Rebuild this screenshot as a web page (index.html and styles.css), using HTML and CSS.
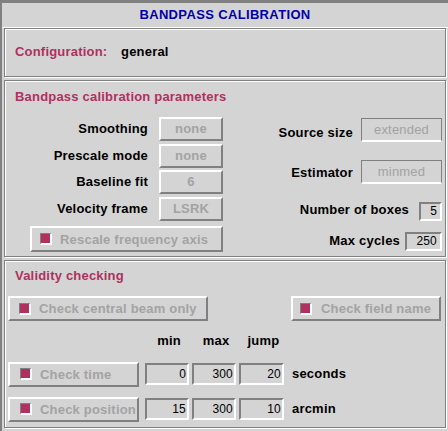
FILE: index.html
```html
<!DOCTYPE html>
<html>
<head>
<meta charset="utf-8">
<title>Bandpass Calibration</title>
<link rel="stylesheet" href="styles.css">
</head>
<body>
<div class="window">
  <div class="title">BANDPASS CALIBRATION</div>
  <div class="frames">
    <section class="frame frame-config">
      <span class="config-label">Configuration:</span>
      <span class="config-value">general</span>
    </section>

    <section class="frame frame-bandpass">
      <h2 class="frame-title">Bandpass calibration parameters</h2>
      <div class="bp-body">
        <div class="bp-left">
          <div class="param-grid">
            <span class="plabel">Smoothing</span><span class="menubox">none</span>
            <span class="plabel">Prescale mode</span><span class="menubox">none</span>
            <span class="plabel">Baseline fit</span><span class="menubox">6</span>
            <span class="plabel">Velocity frame</span><span class="menubox">LSRK</span>
          </div>
          <div class="btn btn-rescale"><span class="indicator"></span><span>Rescale frequency axis</span></div>
        </div>
        <div class="bp-right">
          <div class="rrow row-source"><span class="plabel">Source size</span><span class="optbox">extended</span></div>
          <div class="rrow row-estimator"><span class="plabel">Estimator</span><span class="optbox">minmed</span></div>
          <div class="rrow row-boxes"><span class="plabel">Number of boxes</span><span class="entry entry-boxes">5</span></div>
          <div class="rrow row-cycles"><span class="plabel">Max cycles</span><span class="entry entry-cycles">250</span></div>
        </div>
      </div>
    </section>

    <section class="frame frame-validity">
      <h2 class="frame-title">Validity checking</h2>
      <div class="btn-row">
        <div class="btn btn-central"><span class="indicator"></span><span>Check central beam only</span></div>
        <div class="btn btn-field"><span class="indicator"></span><span>Check field name</span></div>
      </div>
      <div class="vgrid vhead">
        <span></span>
        <span class="colhead">min</span>
        <span class="colhead">max</span>
        <span class="colhead">jump</span>
        <span></span>
      </div>
      <div class="vgrid vrow vrow-time">
        <div class="btn btn-wide"><span class="indicator"></span><span>Check time</span></div>
        <span class="ventry">0</span>
        <span class="ventry">300</span>
        <span class="ventry">20</span>
        <span class="unit">seconds</span>
      </div>
      <div class="vgrid vrow vrow-pos">
        <div class="btn btn-wide"><span class="indicator"></span><span>Check position</span></div>
        <span class="ventry">15</span>
        <span class="ventry">300</span>
        <span class="ventry">10</span>
        <span class="unit">arcmin</span>
      </div>
    </section>
  </div>
</div>
</body>
</html>
```

FILE: styles.css
```css
* { box-sizing: border-box; }
html, body { margin: 0; padding: 0; }
body {
  width: 448px;
  height: 431px;
  overflow: hidden;
  background: #d4d4d4;
  font-family: "Liberation Sans", Arial, sans-serif;
  font-size: 13px;
  font-weight: bold;
  letter-spacing: 0.2px;
  color: #000;
}
.window {
  height: 431px;
  border-top: 3px solid #808080;
  border-left: 2px solid #808080;
}
.title {
  height: 25px;
  line-height: 24px;
  border-bottom: 1px solid #fff;
  text-align: center;
  color: #0000a8;
  letter-spacing: 0.35px;
}
.frames { padding-left: 2px; }
.frame {
  width: 442px;
  border: 1px solid #808080;
  box-shadow: inset 1px 1px 0 #fff, 1px 1px 0 #fff;
  margin-bottom: 3px;
}
.frame-title {
  margin: 0;
  font-size: 13px;
  font-weight: bold;
  line-height: 16px;
  color: #b03060;
  padding-left: 10px;
}

/* configuration */
.frame-config {
  height: 49px;
  display: flex;
  padding: 14.5px 0 0 10px;
  line-height: 16px;
}
.config-label { width: 106px; color: #b03060; }

/* bandpass */
.frame-bandpass { height: 177px; padding-top: 8px; }
.bp-body { display: flex; margin-top: 12px; }
.bp-left { width: 218px; }
.param-grid {
  display: grid;
  grid-template-columns: 143px 64px;
  column-gap: 11px;
  row-gap: 2.5px;
  grid-auto-rows: 24px;
}
.plabel { text-align: right; align-self: center; line-height: 16px; }
.menubox {
  border: 2px solid;
  border-color: #fff #808080 #808080 #fff;
  color: #a3a3a3;
  text-align: center;
  line-height: 20px;
}
.bp-right {
  flex: 1;
  display: flex;
  flex-direction: column;
  align-items: flex-end;
  padding-right: 3px;
  margin-top: 1px;
}
.rrow { display: flex; align-items: center; }
.row-source { height: 24px; gap: 8px; }
.row-source .plabel { padding-top: 5px; }
.row-estimator { height: 24px; gap: 8px; margin-top: 18px; }
.row-estimator .plabel { padding-top: 2px; }
.row-boxes { height: 19px; gap: 10px; margin-top: 18px; }
.row-boxes .plabel { padding-bottom: 4px; }
.row-cycles { height: 19px; gap: 5px; margin-top: 11px; }
.row-cycles .plabel { padding-bottom: 2px; }
.optbox {
  width: 81px;
  height: 24px;
  border: 1px solid #808080;
  border-bottom: 2px solid #fff;
  color: #a3a3a3;
  font-weight: normal;
  text-align: center;
  line-height: 21px;
}
.entry {
  height: 19px;
  border: 2px solid;
  border-color: #808080 #fff #fff #808080;
  font-size: 12px;
  font-weight: normal;
  text-align: right;
  padding-right: 3px;
  line-height: 15px;
}
.entry-boxes { width: 23px; }
.entry-cycles { width: 37px; }

/* buttons */
.btn {
  display: flex;
  align-items: center;
  height: 25px;
  border: 2px solid;
  border-color: #fff #808080 #808080 #fff;
  color: #a3a3a3;
  padding-left: 9px;
  white-space: nowrap;
}
.indicator {
  width: 12px;
  height: 12px;
  flex: none;
  background: #b03060;
  border-style: solid;
  border-width: 1px 2px 2px 1px;
  border-color: #808080 #fff #fff #808080;
  margin-right: 8px;
}
.btn-rescale {
  width: 193px;
  height: 26px;
  margin: 5.5px 0 0 25px;
  padding-left: 8px;
}

/* validity */
.frame-validity { height: 168px; padding-top: 6.5px; }
.btn-row {
  display: flex;
  justify-content: space-between;
  padding: 0 4px 0 3px;
  margin-top: 12.5px;
}
.btn-central { width: 200px; }
.btn-field { width: 150px; padding-left: 7px; }
.btn-field .indicator { margin-right: 9px; }
.vgrid {
  display: grid;
  grid-template-columns: 134px 44px 44px 45px auto;
  column-gap: 3px;
  padding-left: 3px;
}
.vhead { margin-top: 11.5px; line-height: 16px; }
.colhead { text-align: center; padding-left: 4px; }
.vrow { height: 25px; align-items: center; }
.vrow-time { margin-top: 13px; }
.vrow-pos { margin-top: 10px; }
.btn-wide { width: 131px; padding-left: 10px; }
.ventry {
  height: 22px;
  border: 2px solid;
  border-color: #808080 #fff #fff #808080;
  font-size: 12px;
  font-weight: normal;
  text-align: right;
  padding-right: 1px;
  line-height: 18px;
}
.unit { padding-left: 5px; line-height: 16px; }
```
